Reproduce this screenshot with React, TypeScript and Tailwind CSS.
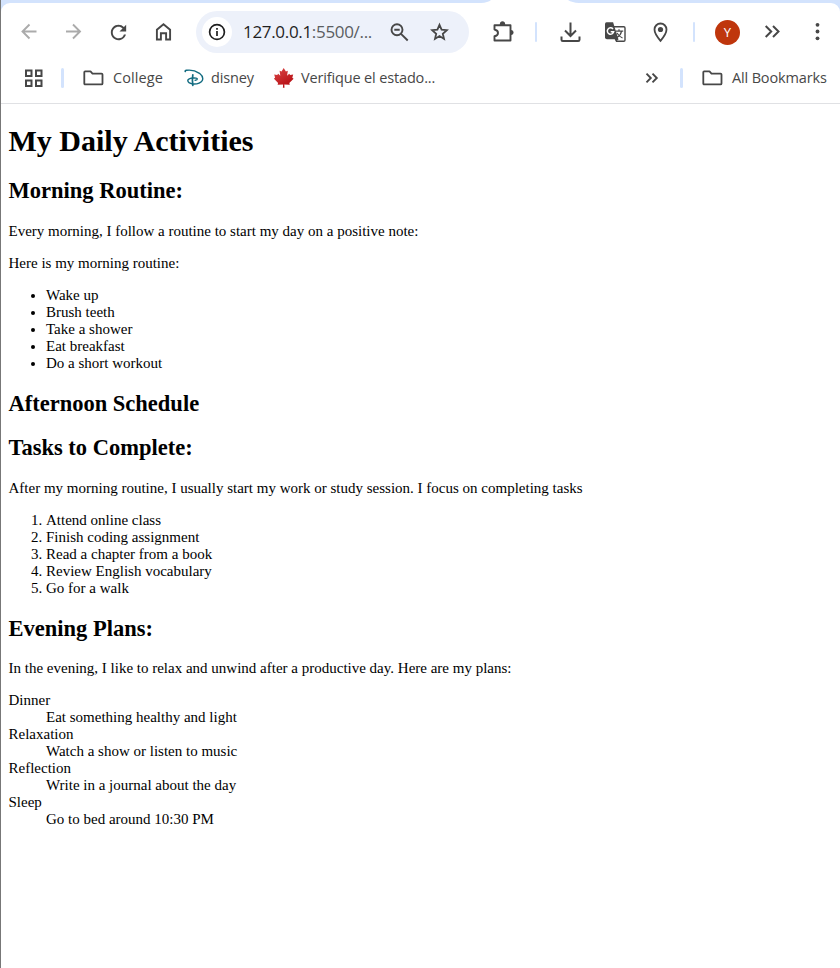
import type { ReactNode } from 'react';
import { MdRefresh } from 'react-icons/md';

function Icon({ children, className = '' }: { children: ReactNode; className?: string }) {
  return (
    <svg viewBox="0 0 26 26" fill="none" stroke="#474747" strokeWidth="2" className={`h-[26px] w-[26px] shrink-0 ${className}`}>
      {children}
    </svg>
  );
}

function Folder({ className = '' }: { className?: string }) {
  return (
    <svg viewBox="0 0 21 16" fill="none" stroke="#474747" strokeWidth="1.8" strokeLinejoin="round" className={`h-4 w-[21px] shrink-0 ${className}`}>
      <path d="M1.3 13.4V2.2q0-.8.8-.8h5.4l2 2.2h9q1 0 1 1v8.8q0 1-1 1H2.2q-.9 0-.9-1Z" />
    </svg>
  );
}

const bookmarkText = "shrink-0 whitespace-nowrap font-['Open_Sans','Noto_Sans',sans-serif] text-[14.5px] leading-5 text-[#474747]";

function Toolbar() {
  return (
    <div className="flex h-[42px] items-center">
      <Icon className="ml-[15px]">
        <path stroke="#ababab" strokeWidth="1.9" d="M20.5 12.5H7M13.5 5.5l-7 7 7 7" />
      </Icon>
      <Icon className="ml-[18px]">
        <path stroke="#ababab" strokeWidth="1.9" d="M6 12.5h13.5M13 5.5l7 7-7 7" />
      </Icon>
      <MdRefresh className="ml-[20.5px] h-[23px] w-[23px] shrink-0 text-[#474747]" />
      <Icon className="ml-[20.5px]">
        <path strokeWidth="1.9" d="M6.9 20.5V10.7l6.6-5.5 6.6 5.5v9.8h-4v-6.2h-5.2v6.2Z" />
      </Icon>
      <div className="ml-5 flex h-[42px] w-[273px] shrink-0 items-center rounded-full bg-[#edf1fa]">
        <div className="ml-1.5 flex h-[30px] w-[30px] shrink-0 items-center justify-center rounded-full bg-white">
          <svg viewBox="0 0 18 18" fill="none" stroke="#1f1f1f" strokeWidth="1.7" className="h-[18px] w-[18px]">
            <circle cx="9" cy="9" r="7.4" />
            <path d="M9 8v5M9 5v1.8" />
          </svg>
        </div>
        <div className="ml-[11px] w-[130px] shrink-0 whitespace-nowrap font-['Open_Sans','Noto_Sans',sans-serif] text-[17px] leading-6 tracking-[-0.32px] text-[#1f1f1f]">
          127.0.0.1<span className="text-[#5a5d61]">:5500/...</span>
        </div>
        <Icon className="ml-[13px]">
          <circle cx="11" cy="10.8" r="5.5" strokeWidth="1.9" />
          <path strokeWidth="1.9" d="M8.3 10.8h5.4M15 14.8l6.7 6.7" />
        </Icon>
        <Icon className="ml-[15px]">
          <path strokeWidth="1.8" d="m12.500 5.800 2.100 4.900 5.200.5-4 3.500 1.200 5.200-4.500-2.800L8 19.900l1.200-5.200-4-3.500 5.200-.5Z" />
        </Icon>
      </div>
      <Icon className="ml-[21px]">
        <path strokeWidth="1.9" strokeLinejoin="round" d="M4.500 6.300h16v15.200h-16v-4.200q3.500-.8 3.500-3.400t-3.500-3.400Z" />
        <path fill="#474747" stroke="none" d="M9.800 6V5q.3-2.800 2.700-2.800T15.200 5v1ZM20.500 10.900h.8q2.300.4 2.300 2.600t-2.300 2.600h-.8Z" />
      </Icon>
      <div className="ml-[19px] h-5 w-0.5 shrink-0 rounded bg-[#d3e3fd]" />
      <Icon className="ml-[21px]">
        <path strokeWidth="2" d="M12.500 3.500v13.500M7 11.500l5.500 5.500 5.500-5.500M3.500 17.500v3.200q0 1.300 1.300 1.300h15.400q1.300 0 1.300-1.300v-3.200" />
      </Icon>
      <Icon className="ml-[19px]">
        <path fill="#474747" stroke="none" d="M3.500 3.200h6.600l5.300 17H4q-2 0-2-2V5q0-1.800 1.500-1.800Z" />
        <path strokeWidth="1.400" d="M11 7.800h9.800q1.200 0 1.200 1.200v12q0 1.200-1.200 1.200h-7.300l-1.200-2.600" />
        <path stroke="#fff" strokeWidth="1.500" d="M10 10a3.200 3.200 0 1 0 .7 2.700H7.700" />
        <path strokeWidth="1.200" d="M12.500 12.200h7.700M16 10.300v1.900M18.500 12.400q-.8 4-4.500 6M14 14q2 3.500 5.500 5" />
        <path fill="#474747" stroke="none" d="m12 19.800 3.700.3-2.400 2.500Z" />
      </Icon>
      <Icon className="ml-[19px]">
        <path strokeWidth="1.800" d="M12.500 21.800Q6.500 14.800 6.500 10.500a6 6 0 0 1 12 0q0 4.300-6 11.300Z" />
        <circle cx="12.500" cy="10.500" r="2.600" fill="#474747" stroke="none" />
      </Icon>
      <div className="ml-[19px] h-5 w-0.5 shrink-0 rounded bg-[#d3e3fd]" />
      <div className="ml-5 flex h-[25px] w-[25px] shrink-0 items-center justify-center rounded-full bg-[#bf360c] font-['Open_Sans','Noto_Sans',sans-serif] text-[13px] leading-none text-white">Y</div>
      <Icon className="ml-5">
        <path d="m5.700 7 5.500 5.500-5.500 5.500M13 7l5.500 5.500L13 18" />
      </Icon>
      <Icon className="ml-[19px]">
        <g fill="#474747" stroke="none">
          <circle cx="12.500" cy="5.800" r="1.900" />
          <circle cx="12.500" cy="12.500" r="1.900" />
          <circle cx="12.500" cy="19.300" r="1.900" />
        </g>
      </Icon>
    </div>
  );
}

function Bookmarks() {
  return (
    <div className="mt-[15px] flex h-5 items-center">
      <svg viewBox="0 0 20 20" fill="none" stroke="#474747" strokeWidth="2" className="ml-[22.500px] h-5 w-5 shrink-0">
        <path d="M2 2.500h5.500V8H2ZM12 2.500h5.500V8H12ZM2 12.500h5.500V18H2ZM12 12.500h5.500V18H12Z" />
      </svg>
      <div className="ml-[17.500px] h-5 w-[3px] shrink-0 rounded bg-[#d3e3fd]" />
      <Folder className="ml-[19px]" />
      <span className={`${bookmarkText} ml-[9px] w-[50px] tracking-[0.1px]`}>College</span>
      <svg viewBox="0 0 20 20" fill="none" stroke="#126b80" strokeWidth="1.400" strokeLinecap="round" className="ml-[21px] h-5 w-5 shrink-0">
        <path d="M1.300 3.600Q.6 2.700 2.500 2.300 9.500 1.300 15.500 5.300q4.300 3.400 2.900 7Q16 16.300 8.800 16 4 15 3.800 12.600 4 10.600 8.500 10q4.800-.3 4.800.9 0 1-2.100 1.400" />
        <path strokeWidth="1.700" d="M8.800 6.800Q8 12 8.800 17.300" />
      </svg>
      <span className={`${bookmarkText} ml-[7px] w-[43px] tracking-[-0.15px]`}>disney</span>
      <svg viewBox="0 0 20 20" className="ml-5 h-5 w-5 shrink-0">
        <defs>
          <linearGradient id="leaf" x1="0" y1="0" x2=".6" y2="1">
            <stop offset="0" stopColor="#dc4848" />
            <stop offset="1" stopColor="#b50d12" />
          </linearGradient>
        </defs>
        <path fill="url(#leaf)" d="m9.700 0 2.200 3.500 1.900-.8-.7 5 2.100-1.900 1 1.200 3-.5-.9 3.200 1.300 1-4.300 4.200.5 1.900-5.500-.2.200 3.200H8.900l.2-3.200-5.500.2.500-1.900L-.1 10.700l1.200-1-.9-3.200 3 .5 1-1.200 2.100 1.900-.7-5 1.900.8Z" />
      </svg>
      <span className={`${bookmarkText} ml-[7px] w-[134px] tracking-[-0.15px]`}>Verifique el estado...</span>
      <Icon className="ml-[205px]">
        <path strokeWidth="1.900" d="m6.500 8.700 4.300 4.300-4.300 4.300M12.500 8.700l4.300 4.300-4.300 4.300" />
      </Icon>
      <div className="ml-[14px] h-5 w-[3px] shrink-0 rounded bg-[#d3e3fd]" />
      <Folder className="ml-[19px]" />
      <span className={`${bookmarkText} ml-[9px] w-[95px] tracking-[-0.15px]`}>All Bookmarks</span>
    </div>
  );
}

const h2 = 'my-[18.675px] text-[22.5px] font-bold leading-[26px]';
const para = 'my-[15px]';

export default function App() {
  return (
    <div className="h-[968px] w-[840px] overflow-hidden border-l border-[#777] bg-white">
      <header className="h-[104px] overflow-hidden border-b border-[#e0e1e4] bg-[#d3e3fd]">
        <div className="flex h-[3px] justify-start">
          <svg viewBox="0 0 98 3" className="ml-[480px] h-[3px] w-[98px] shrink-0">
            <path d="M0 3q7-.5 10-3h77q4 2.600 11 3Z" fill="#fff" />
          </svg>
        </div>
        <div className="h-[100px] rounded-t-[9px] bg-white pt-2">
          <Toolbar />
          <Bookmarks />
        </div>
      </header>
      <main className="flow-root px-[7.5px] font-['Liberation_Serif',serif] text-[15px] leading-[17px] text-black">
        <h1 className="my-[20.1px] text-[30px] font-bold leading-[34px]">My Daily Activities</h1>
        <h2 className={h2}>Morning Routine:</h2>
        <p className={para}>Every morning, I follow a routine to start my day on a positive note:</p>
        <p className={para}>Here is my morning routine:</p>
        <ul className="my-[15px] list-disc pl-[37.5px]">
          <li>Wake up</li>
          <li>Brush teeth</li>
          <li>Take a shower</li>
          <li>Eat breakfast</li>
          <li>Do a short workout</li>
        </ul>
        <h2 className={h2}>Afternoon Schedule</h2>
        <h2 className={h2}>Tasks to Complete:</h2>
        <p className={para}>After my morning routine, I usually start my work or study session. I focus on completing tasks</p>
        <ol className="my-[15px] list-decimal pl-[37.5px]">
          <li>Attend online class</li>
          <li>Finish coding assignment</li>
          <li>Read a chapter from a book</li>
          <li>Review English vocabulary</li>
          <li>Go for a walk</li>
        </ol>
        <h2 className={h2}>Evening Plans:</h2>
        <p className={para}>In the evening, I like to relax and unwind after a productive day. Here are my plans:</p>
        <dl className="my-[15px] [&_dd]:ml-[37.5px]">
          <dt>Dinner</dt>
          <dd>Eat something healthy and light</dd>
          <dt>Relaxation</dt>
          <dd>Watch a show or listen to music</dd>
          <dt>Reflection</dt>
          <dd>Write in a journal about the day</dd>
          <dt>Sleep</dt>
          <dd>Go to bed around 10:30 PM</dd>
        </dl>
      </main>
    </div>
  );
}
